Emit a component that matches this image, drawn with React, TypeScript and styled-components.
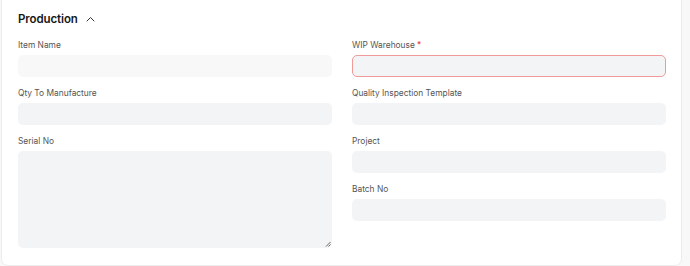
import React from "react";
import styled, { createGlobalStyle } from "styled-components";

const Global = createGlobalStyle`
  html, body { margin: 0; padding: 0; background: #f8f8f8; }
  body { font-family: Inter, "Noto Sans", sans-serif; -webkit-font-smoothing: antialiased; }
`;

const Card = styled.section`
  box-sizing: border-box;
  margin: -8px 0 0 1px;
  width: 681px;
  background: #ffffff;
  border: 1px solid #ececec;
  border-radius: 7px;
  padding: 18px 16px 17px 16px;
`;

const Header = styled.div`
  display: flex;
  align-items: center;
  gap: 8px;
  height: 16px;
  margin-bottom: 12px;
`;

const Title = styled.h3`
  margin: 0;
  font-size: 11.5px;
  font-weight: 600;
  letter-spacing: -0.1px;
  color: #171717;
  line-height: 16px;
`;

const Grid = styled.div`
  display: grid;
  grid-template-columns: 314px 314px;
  column-gap: 20px;
`;

const Column = styled.div`
  display: flex;
  flex-direction: column;
  gap: 10px;
`;

const Field = styled.div`
  display: flex;
  flex-direction: column;
  gap: 4px;
`;

const Label = styled.label`
  font-size: 8.4px;
  line-height: 12px;
  color: #555555;
`;

const Req = styled.span`
  color: #e03636;
  margin-left: 2px;
`;

const Input = styled.div<{ $readonly?: boolean; $error?: boolean }>`
  box-sizing: border-box;
  height: 22px;
  border-radius: 5px;
  background: ${(p) => (p.$readonly ? "#f8f8f8" : "#f3f4f5")};
  border: 1px solid ${(p) => (p.$error ? "#f19a9a" : "transparent")};
`;

const TextArea = styled.div`
  position: relative;
  box-sizing: border-box;
  height: 97px;
  border-radius: 5px;
  background: #f3f4f5;
`;

const Grip = styled.svg`
  position: absolute;
  right: 1px;
  bottom: 1px;
`;

function Chevron() {
  return (
    <svg width="9" height="6" viewBox="0 0 9 6" fill="none">
      <path d="M1 5 L4.5 1.5 L8 5" stroke="#333" strokeWidth="1" strokeLinecap="round" strokeLinejoin="round" />
    </svg>
  );
}

export default function App() {
  return (
    <>
      <Global />
      <Card>
        <Header>
          <Title>Production</Title>
          <Chevron />
        </Header>
        <Grid>
          <Column>
            <Field>
              <Label>Item Name</Label>
              <Input $readonly />
            </Field>
            <Field>
              <Label>Qty To Manufacture</Label>
              <Input />
            </Field>
            <Field>
              <Label>Serial No</Label>
              <TextArea>
                <Grip width="6" height="6" viewBox="0 0 6 6">
                  <path d="M5.5 1 L1 5.5 M5.5 3.5 L3.5 5.5" stroke="#555" strokeWidth="0.9" />
                </Grip>
              </TextArea>
            </Field>
          </Column>
          <Column>
            <Field>
              <Label>
                WIP Warehouse<Req>*</Req>
              </Label>
              <Input $error />
            </Field>
            <Field>
              <Label>Quality Inspection Template</Label>
              <Input />
            </Field>
            <Field>
              <Label>Project</Label>
              <Input />
            </Field>
            <Field>
              <Label>Batch No</Label>
              <Input />
            </Field>
          </Column>
        </Grid>
      </Card>
    </>
  );
}
